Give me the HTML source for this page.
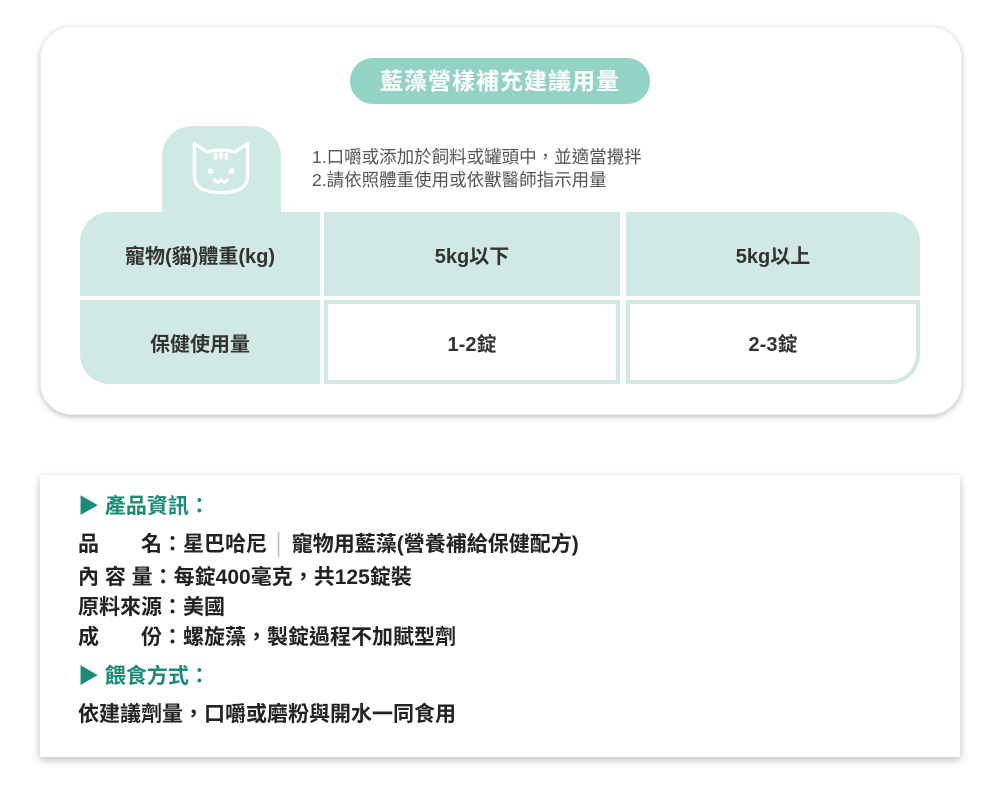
<!DOCTYPE html>
<html><head><meta charset="utf-8"><style>
*{margin:0;padding:0;box-sizing:border-box}
body{width:1000px;height:799px;background:#fff;font-family:"Liberation Sans","Noto Sans CJK TC",sans-serif;position:relative;overflow:hidden}
.card{position:absolute;left:40px;top:26px;width:922px;height:389px;border-radius:32px;background:#fff;box-shadow:0 2px 6px rgba(0,0,0,.25);border:1px solid #eee}
.pill{position:absolute;left:350px;top:58px;width:300px;height:46px;border-radius:23px;background:#93d3c5;color:#fff;font-size:23px;font-weight:bold;text-align:center;line-height:46px;letter-spacing:1px}
.tab{position:absolute;left:162px;top:126px;width:119px;height:90px;border-radius:30px 30px 0 0;background:#d0e9e4}
.notes{position:absolute;left:312px;top:146px;font-size:17.5px;line-height:23px;color:#555;white-space:nowrap}
.c{position:absolute;display:flex;align-items:center;justify-content:center;font-size:20px;font-weight:bold;color:#333}
.t{background:#d0e9e4}
.w{background:#fff;border:4px solid #d0e9e4}
.info{position:absolute;left:40px;top:475px;width:920px;height:282px;background:#fff;box-shadow:0 3px 8px rgba(0,0,0,.25)}
.l{position:absolute;left:78px;font-size:21px;font-weight:bold;color:#222;white-space:nowrap;line-height:26px}
.h{color:#1c8a78}
</style></head><body>
<div class="card"></div>
<div class="pill">藍藻營樣補充建議用量</div>
<div class="tab"></div>
<svg style="position:absolute;left:188px;top:137px" width="66" height="60" viewBox="0 0 62 56" fill="none" stroke="#fff" stroke-width="3" stroke-linecap="round" stroke-linejoin="round">
<path d="M6 6 L18 14 Q31 10 44 14 L56 6 L56 36 Q56 52 31 52 Q6 52 6 36 Z"/>
<path d="M26 16v4M31 15v4M36 16v4"/>
<circle cx="21" cy="32" r="1.2" fill="#fff"/><circle cx="41" cy="32" r="1.2" fill="#fff"/>
<path d="M25 40q3 4 6 0q3 4 6 0"/>
</svg>
<div class="notes">1.口嚼或添加於飼料或罐頭中，並適當攪拌<br>2.請依照體重使用或依獸醫師指示用量</div>
<div class="c t" style="left:80px;top:212px;width:240px;height:84px;border-radius:30px 0 0 0">寵物(貓)體重(kg)</div>
<div class="c t" style="left:324px;top:212px;width:296px;height:84px">5kg以下</div>
<div class="c t" style="left:626px;top:212px;width:294px;height:84px;border-radius:0 30px 0 0">5kg以上</div>
<div class="c t" style="left:80px;top:300px;width:240px;height:84px;border-radius:0 0 0 30px">保健使用量</div>
<div class="c w" style="left:324px;top:300px;width:296px;height:84px">1-2錠</div>
<div class="c w" style="left:626px;top:300px;width:294px;height:84px;border-radius:0 0 30px 0">2-3錠</div>
<div class="info"></div>
<div class="l h" style="top:494px">▶ 產品資訊：</div>
<div class="l" style="top:532px">品　　名：星巴哈尼<span style="color:#bbb;font-weight:normal"> │ </span>寵物用藍藻(營養補給保健配方)</div>
<div class="l" style="top:565px">內 容 量：每錠400毫克，共125錠裝</div>
<div class="l" style="top:595px">原料來源：美國</div>
<div class="l" style="top:625px">成　　份：螺旋藻，製錠過程不加賦型劑</div>
<div class="l h" style="top:664px">▶ 餵食方式：</div>
<div class="l" style="top:702px">依建議劑量，口嚼或磨粉與開水一同食用</div>
</body></html>
